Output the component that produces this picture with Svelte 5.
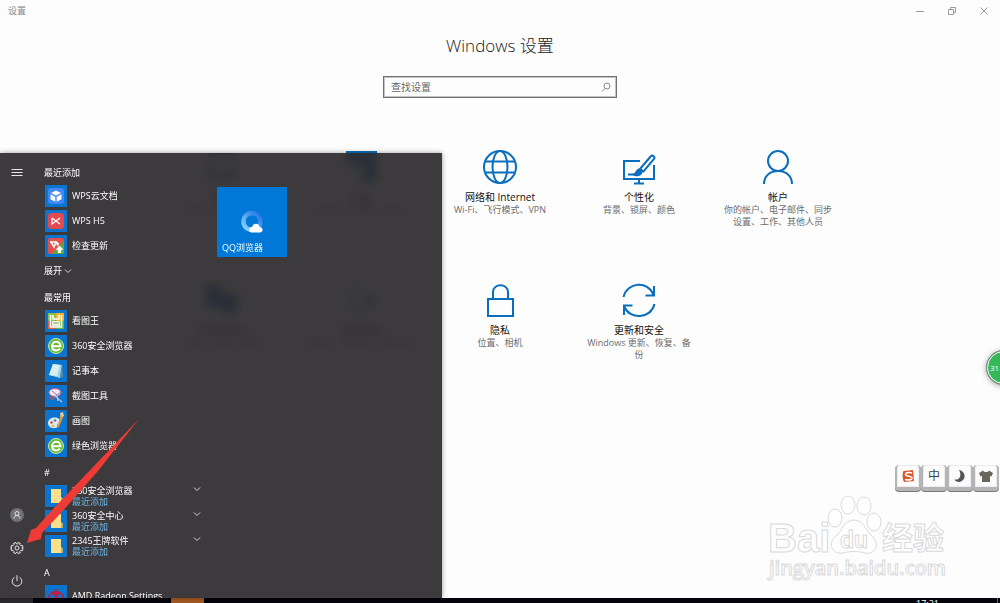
<script lang="ts">
	// Types/constants
	type App = {
		name: string
		icon: string
		note?: string
	}

	type AppGroup = {
		title: string
		apps: App[]
		expandable?: boolean
	}

	const categories = [
		{ icon: 'system', name: '系统', description: '显示、通知、电源' },
		{ icon: 'devices', name: '设备', description: '蓝牙、打印机、鼠标' },
		{ icon: 'network', name: '网络和 Internet', description: 'Wi-Fi、飞行模式、VPN' },
		{ icon: 'personalize', name: '个性化', description: '背景、锁屏、颜色' },
		{ icon: 'account', name: '帐户', description: '你的帐户、电子邮件、同步设置、工作、其他人员' },
		{ icon: 'time', name: '时间和语言', description: '语音、区域、日期' },
		{ icon: 'ease', name: '轻松使用', description: '讲述人、放大镜、高对比度' },
		{ icon: 'privacy', name: '隐私', description: '位置、相机' },
		{ icon: 'update', name: '更新和安全', description: 'Windows 更新、恢复、备份' },
	]

	const groups: AppGroup[] = [
		{
			title: '最近添加',
			expandable: true,
			apps: [
				{ name: 'WPS云文档', icon: 'cube' },
				{ name: 'WPS H5', icon: 'h5' },
				{ name: '检查更新', icon: 'wps-update' },
			],
		},
		{
			title: '最常用',
			apps: [
				{ name: '看图王', icon: 'viewer' },
				{ name: '360安全浏览器', icon: 'browser' },
				{ name: '记事本', icon: 'notepad' },
				{ name: '截图工具', icon: 'snip' },
				{ name: '画图', icon: 'paint' },
				{ name: '绿色浏览器', icon: 'browser' },
			],
		},
		{
			title: '#',
			apps: [
				{ name: '360安全浏览器', icon: 'folder', note: '最近添加' },
				{ name: '360安全中心', icon: 'folder', note: '最近添加' },
				{ name: '2345王牌软件', icon: 'folder', note: '最近添加' },
			],
		},
		{
			title: 'A',
			apps: [
				{ name: 'AMD Radeon Settings', icon: 'amd' },
			],
		},
	]


	// State
	let query = $state('')
</script>


{#snippet categoryIcon(icon: string)}
	<svg class="category-icon" viewBox="0 0 36 36" aria-hidden="true">
		{#if icon === 'system'}
			<path d="M6 5h24v18H6zM1 29h34" />
		{:else if icon === 'devices'}
			<path class="solid" d="M4 3h29v12H4zM20 10h13v22H20z" />
		{:else if icon === 'network'}
			<circle cx="18" cy="18" r="16" />
			<ellipse cx="18" cy="18" rx="7.500" ry="16" />
			<path d="M3.500 12.500h29M3.500 23.500h29" />
		{:else if icon === 'personalize'}
			<path d="M19 12H3v18h30V16M18 30v4M13 34.500h10" />
			<path d="M7 25.500h8" />
			<path d="M19 20 30 7c1.500-1.500 4.500 1 3 3L22.500 22.500z" />
			<path class="solid" d="M13 25.500c2.500-.5 2-4.500 5-5 2.500 0 3.500 2 2 4s-4.500 2-7 1z" />
		{:else if icon === 'account'}
			<circle cx="18" cy="12" r="10" />
			<path d="M4 35c0-8 6-13 14-13s14 5 14 13" />
		{:else if icon === 'time'}
			<path class="solid" d="M3 3h14v22H3zM18 12h15v18H18z" />
		{:else if icon === 'ease'}
			<path d="M30 18a12 12 0 1 1-12-12M14 18h18M24 10l8 8" />
		{:else if icon === 'privacy'}
			<path d="M6 17h25v17H6z" />
			<path d="M11 17v-7c0-9 15-9 15 0v7" />
		{:else}
			<path d="M2.500 15C6 0 27-2 32.500 13M33 4v9.500h-8.500" />
			<path d="M33.500 22C30 37 9 38 3.500 25M3 33v-9.500h8.500" />
		{/if}
	</svg>
{/snippet}


{#snippet appIcon(icon: string)}
	<svg class="app-icon" viewBox="0 0 22 22" aria-hidden="true">
		{#if icon === 'cube'}
			<rect x="3" y="3" width="16" height="16" rx="3" fill="#3f87f5" />
			<path d="M11 5.500 16 8l-5 2.500L6 8z" fill="#fff" />
			<path d="M5.500 9.300 10.300 11.700v5L5.500 14.300zM16.500 9.300 11.700 11.700v5l4.800-2.400z" fill="#fff" />
		{:else if icon === 'h5'}
			<rect x="3" y="3" width="16" height="16" rx="3" fill="#e04a50" />
			<path d="M7 8v6l4-3 4-3M7 8l4 3 4 3" fill="none" stroke="#fff" stroke-width="1.200" />
		{:else if icon === 'wps-update'}
			<rect x="3" y="3" width="16" height="16" rx="2" fill="#e2504a" />
			<path d="M19 6v11a2 2 0 0 1-2 2H7z" fill="#55ab3a" />
			<path d="M5 7h6l3 2M6 7l3 5 2-5 2 4" fill="none" stroke="#fff" stroke-width="1.500" />
			<path d="m14.500 10.500 4 4.200h-2.300V18h-3.400v-3.300h-2.300z" fill="#fff" />
		{:else if icon === 'viewer'}
			<rect x="3" y="3" width="8" height="8" rx="1" fill="#8cc63f" />
			<rect x="11" y="3" width="8" height="8" rx="1" fill="#f7b52c" />
			<rect x="3" y="11" width="8" height="8" rx="1" fill="#ee6333" />
			<rect x="11" y="11" width="8" height="8" rx="1" fill="#62b84a" />
			<path d="M5.500 5v12h11V5M8 5v4h6V5M8 9h6" fill="none" stroke="#fff" stroke-width="1.500" />
			<path d="M7 11h8v5H7z" fill="#e9f1df" />
			<path d="M8.500 13h5" stroke="#8a9474" />
		{:else if icon === 'browser'}
			<circle cx="11" cy="11" r="7.500" fill="#63b92f" stroke="#c8ecac" stroke-width="1" />
			<path d="M6.500 11.200h9c0-6-8.500-5.800-8.500 0 0 4.800 5.500 5.300 8 2.500" fill="none" stroke="#fff" stroke-width="2" />
		{:else if icon === 'notepad'}
			<path d="m8 4 9 1-2 13-11-3z" fill="#a3d4de" />
			<path d="m8 4 7 1-3 11-8-1z" fill="#d7eff3" />
			<path d="m17 5-2 13 3-1z" fill="#5c8e9c" />
		{:else if icon === 'snip'}
			<ellipse cx="10" cy="7.500" rx="6" ry="4" fill="#f2e5ee" stroke="#c65a86" />
			<path d="m7 6 5 4M8 13l8-6" stroke="#7e8aa2" />
			<path d="m10 11 7 6M12 10l1 6" stroke="#b9c1cf" stroke-width="1.300" />
			<ellipse cx="7" cy="13" rx="2" ry="1.500" fill="none" stroke="#d14f55" />
		{:else if icon === 'paint'}
			<path d="M3 13c0-5 7-7 11-4 3 3 1 5-1 5-2 1 1 4-3 4-4 1-7-2-7-5z" fill="#dce8ef" />
			<circle cx="6.500" cy="12.500" r="1.300" fill="#d8433c" />
			<circle cx="10" cy="10.500" r="1.300" fill="#3b86cf" />
			<circle cx="8" cy="16" r="1.300" fill="#e9ad28" />
			<path d="m16 3 3 2-5 12-2 1 1-4z" fill="#d5964c" />
			<path d="m15 3 3-1 1 4-3 1z" fill="#e6c995" />
		{:else if icon === 'folder'}
			<path d="M6 4h10v8l1.500 1.500V18H6z" fill="#fbe08b" />
			<path d="M16 12v6h1.500v-4.500z" fill="#e0ae43" />
		{:else}
			<path d="M4 13c0-8 14-8 14 0M7 7l8 8M15 7l-8 8M11 4v10" fill="none" stroke="#b51f43" stroke-width="2" />
		{/if}
	</svg>
{/snippet}


{#snippet chevron()}
	<svg class="chevron" viewBox="0 0 8 8" aria-hidden="true">
		<path d="m1 2.500 3 3 3-3" />
	</svg>
{/snippet}


<div class="desktop">
	<main class="settings">
		<header class="titlebar">
			<span class="app-title">设置</span>
			<button type="button" aria-label="最小化">
				<svg viewBox="0 0 10 10"><path d="M1 5.500h8" /></svg>
			</button>
			<button type="button" aria-label="还原">
				<svg viewBox="0 0 10 10"><path d="M1.500 3.500h5v5h-5zM3.500 3.500v-2h5v5h-2" /></svg>
			</button>
			<button type="button" aria-label="关闭">
				<svg viewBox="0 0 10 10"><path d="m1.500 1.500 7 7M8.500 1.500l-7 7" /></svg>
			</button>
		</header>

		<h1>Windows 设置</h1>

		<form class="search" role="search">
			<input type="text" placeholder="查找设置" aria-label="查找设置" bind:value={query} />
			<button type="button" aria-label="搜索">
				<svg viewBox="0 0 10 10"><circle cx="6" cy="4" r="3" /><path d="M4 6.500 1 9.500" /></svg>
			</button>
		</form>

		<nav class="categories">
			{#each categories as category}
				<a href="#{category.icon}">
					{@render categoryIcon(category.icon)}
					<span class="name">{category.name}</span>
					<span class="description">{category.description}</span>
				</a>
			{/each}
		</nav>
	</main>

	<footer class="taskbar">
		<button type="button" class="start" aria-label="开始"></button>
		<button type="button" class="running" aria-label="设置"></button>
		<time>17:21</time>
		<button type="button" class="show-desktop" aria-label="显示桌面"></button>
	</footer>

	<section class="start-menu" aria-label="开始菜单">
		<div class="rail">
			<button type="button" aria-label="展开">
				<svg viewBox="0 0 14 14"><path d="M1.500 3.500h11M1.500 6.500h11M1.500 9.500h11" /></svg>
			</button>
			<button type="button" class="user" aria-label="帐户">
				<svg viewBox="0 0 14 14">
					<circle class="disc" cx="7" cy="7" r="7" />
					<circle cx="7" cy="5.500" r="2" />
					<path d="M4 10.500c0-4 6-4 6 0" />
				</svg>
			</button>
			<button type="button" aria-label="设置">
				<svg viewBox="0 0 14 14">
					<path d="m5.800 1.500.4 1.300h1.600l.4-1.300 2.200.9-.6 1.300 1.100 1.100 1.300-.6.9 2.200-1.300.6 1.300.6-.9 2.200-1.300-.5-1.100 1.100.6 1.300-2.200.9-.5-1.300H6.200l-.5 1.300-2.200-.9.600-1.300L3 9.300l-1.300.5-.9-2.200L2.100 7 .8 6.400l.9-2.200 1.300.6 1.100-1.100-.6-1.300z" />
					<circle cx="7" cy="7" r="2" />
				</svg>
			</button>
			<button type="button" aria-label="电源">
				<svg viewBox="0 0 14 14"><path d="M4.500 3.200a4.800 4.800 0 1 0 5 0M7 1.200V7" /></svg>
			</button>
		</div>

		<div class="apps">
			{#each groups as group}
				<h2>{group.title}</h2>
				{#each group.apps as app}
					<button type="button" class="app">
						{@render appIcon(app.icon)}
						<span class="label">
							{app.name}
							{#if app.note}
								<small>{app.note}</small>
							{/if}
						</span>
						{#if app.note}
							{@render chevron()}
						{/if}
					</button>
				{/each}
				{#if group.expandable}
					<button type="button" class="expand">展开 {@render chevron()}</button>
				{/if}
			{/each}
		</div>

		<div class="tiles">
			<button type="button" class="tile">
				<svg viewBox="0 0 24 24" aria-hidden="true">
					<defs>
						<linearGradient id="ring" x1="0" y1="1" x2="1" y2="0">
							<stop offset="0" stop-color="#8fd6ff" />
							<stop offset="1" stop-color="#1b72e0" />
						</linearGradient>
					</defs>
					<circle cx="12" cy="11.500" r="8.500" fill="none" stroke="url(#ring)" stroke-width="4.500" />
					<path d="M12 22.500c-4 0-4-5.500 0-5.500 1-4.500 7-4.500 7.800 0 4 .5 3.500 5.500 0 5.500z" fill="#fff" />
				</svg>
				<span>QQ浏览器</span>
			</button>
		</div>
	</section>

	<svg class="arrow" viewBox="0 0 114 126" aria-hidden="true">
		<path d="M113 1 72 53 34 96 16 115 15 121 1 125 5 112 10 110 27 91 68 48z" />
	</svg>

	<div class="ime" role="toolbar" aria-label="输入法">
		<button type="button" aria-label="搜狗输入法">
			<svg viewBox="0 0 14 14">
				<path d="M2.500 2 12 1l1 11-9.500 1C1.500 13 1 4 2.500 2z" fill="#dc5427" />
				<path d="M11 4C8 3 4.500 3.500 4.500 5.500S11 7 11 9s-3.500 2.500-7 1.500" fill="none" stroke="#fff" stroke-width="1.700" />
			</svg>
		</button>
		<button type="button">中</button>
		<button type="button" aria-label="半角">
			<svg viewBox="0 0 14 14"><path d="M6 1c7 1 8 11 0 12-2 0-4-1-4.500-2.500C7 11.500 9 6 6 1z" fill="#55565a" /></svg>
		</button>
		<button type="button" aria-label="皮肤">
			<svg viewBox="0 0 14 14"><path d="M4 1.500c1 2 5 2 6 0L14 4l-1.500 3.500-1.500-.5v6H3V7l-1.500.5L0 4z" fill="#68655c" /></svg>
		</button>
	</div>

	<button type="button" class="ball">31</button>

	<svg class="watermark" viewBox="0 0 184 92" aria-hidden="true">
		<text class="latin" x="2" y="57" font-size="40">Bai</text>
		<ellipse cx="69" cy="23" rx="7" ry="9" />
		<ellipse cx="82" cy="10" rx="7" ry="9" />
		<ellipse cx="98" cy="11" rx="7" ry="9" />
		<ellipse cx="108" cy="27" rx="7" ry="9" />
		<path d="M88 25c10 0 12 12 18 16 9 8 3 19-7 17-7-2-15-2-22 0-11 2-16-10-7-17 6-5 8-16 18-16z" />
		<text class="latin" x="74" y="53" font-size="23">du</text>
		<text class="cjk" x="116" y="54" font-size="31">经验</text>
		<text class="url" x="3" y="80" font-size="20">jingyan.baidu.com</text>
	</svg>
</div>


<style>
	:global(body) {
		margin: 0;
	}

	.desktop {
		--accent: #0a6ebd;
		--tile: #0078d7;
		--taskbar-height: 5px;

		position: relative;
		display: flex;
		flex-direction: column;
		min-height: 100vh;
		overflow: hidden;
		background: #fdfdfd;
		color: #222;
		font-family: 'Open Sans', 'Noto Sans CJK SC', sans-serif;
		font-size: 9px;
		line-height: 12px;
	}

	button {
		display: flex;
		align-items: center;
		justify-content: center;
		padding: 0;
		background: transparent;
		border: none;
		color: inherit;
		font: inherit;
	}

	svg {
		flex: none;
	}

	/* Settings window */
	.settings {
		flex: 1;
		display: flex;
		flex-direction: column;
		align-items: center;
	}

	.titlebar {
		align-self: stretch;
		display: flex;
		align-items: center;
		height: 22px;
		color: #888;

		& .app-title {
			margin-right: auto;
			padding-left: 8px;
		}

		& button {
			width: 32px;
			height: 22px;
		}

		& svg {
			width: 10px;
			height: 10px;
			fill: none;
			stroke: #999;
		}
	}

	h1 {
		margin: 12px 0 19px;
		font-size: 17px;
		font-weight: 300;
		line-height: 23px;
	}

	.search {
		display: flex;
		box-sizing: border-box;
		width: 234px;
		height: 22px;
		border: 1px solid #707070;
		outline: 1px solid #c4c4c4;
		outline-offset: -2px;

		& input {
			flex: 1;
			min-width: 0;
			padding: 0 7px;
			background: transparent;
			border: none;
			outline: none;
			font: inherit;
			font-size: 10px;

			&::placeholder {
				color: #666;
			}
		}

		& button {
			width: 20px;
		}

		& svg {
			width: 10px;
			height: 10px;
			fill: none;
			stroke: #888;
		}
	}

	.categories {
		display: grid;
		grid-template-columns: repeat(5, 1fr);
		grid-auto-rows: minmax(133px, auto);
		width: 100%;
		max-width: 695px;
		margin-top: 51px;

		& a {
			display: flex;
			flex-direction: column;
			align-items: center;
			padding: 0 15px;
			color: inherit;
			text-align: center;
			text-decoration: none;
		}
	}

	.category-icon {
		width: 36px;
		height: 36px;
		margin-bottom: 5px;
		fill: none;
		stroke: var(--accent);
		stroke-width: 2;

		& .solid {
			fill: var(--accent);
		}
	}

	.name {
		color: #111;
		font-size: 10px;
		line-height: 14px;
	}

	.description {
		color: #6c6c6c;
	}

	/* Start menu */
	.start-menu {
		position: absolute;
		top: 153px;
		bottom: var(--taskbar-height);
		left: 0;
		display: flex;
		box-sizing: border-box;
		width: 442px;
		overflow: hidden;
		background: rgb(45 43 45 / 93%);
		box-shadow: 0 0 5px rgb(0 0 0 / 40%);
		color: #fff;
		backdrop-filter: blur(4px);
	}

	.rail {
		display: flex;
		flex-direction: column;
		flex: none;
		width: 33px;
		padding: 3px 0 1px;

		& button {
			height: 33px;
		}

		& .user {
			margin-top: auto;
		}

		& svg {
			width: 14px;
			height: 14px;
			fill: none;
			stroke: #e6e6e6;
		}

		& .disc {
			fill: #717073;
			stroke: none;
		}
	}

	.apps {
		flex: none;
		width: 157px;
		padding: 5px 0 0 11px;

		& h2 {
			margin: 0;
			padding-top: 5px;
			font-size: 9px;
			font-weight: 400;
			line-height: 20px;
		}
	}

	.app {
		gap: 5px;
		width: 100%;
		height: 25px;
		text-align: left;

		& .label {
			flex: 1;
			line-height: 11px;
			white-space: nowrap;
		}

		& small {
			display: block;
			color: #6fb4e6;
			font-size: inherit;
		}

		& .chevron {
			align-self: flex-start;
			margin-top: 2px;
		}
	}

	.app-icon {
		width: 22px;
		height: 22px;
		margin-left: 1px;
		background: #0b74cf;
	}

	.expand {
		gap: 2px;
		height: 25px;
	}

	.chevron {
		width: 8px;
		height: 8px;
		fill: none;
		stroke: #d8d8d8;
	}

	.tiles {
		padding: 34px 0 0 16px;
	}

	.tile {
		flex-direction: column;
		justify-content: flex-end;
		gap: 8px;
		width: 70px;
		height: 70px;
		background: var(--tile);

		& svg {
			width: 24px;
			height: 24px;
		}

		& span {
			align-self: stretch;
			padding: 0 0 3px 5px;
			text-align: left;
		}
	}

	/* Taskbar */
	.taskbar {
		display: flex;
		height: var(--taskbar-height);
		overflow: hidden;
		background: #05030b;
		color: #fff;

		& .start {
			width: 33px;
			background: #2b2a2e;
		}

		& .running {
			width: 33px;
			margin-left: 138px;
			background: #a65a22;
		}

		& time {
			margin-left: auto;
			padding-right: 58px;
		}

		& .show-desktop {
			width: 3px;
			border-left: 1px solid #666;
		}
	}

	/* Overlays */
	.arrow {
		position: absolute;
		top: 418px;
		left: 26px;
		width: 114px;
		height: 126px;
		fill: #ef3b36;
		pointer-events: none;
	}

	.ime {
		position: absolute;
		top: 465px;
		right: 1px;
		display: flex;

		& button {
			box-sizing: border-box;
			width: 26px;
			height: 26px;
			background: #fcfcfc;
			border: solid #b5b5b8;
			border-width: 0 2px 4px;
			border-radius: 4px;
			box-shadow: inset 0 0 0 1px #ececee, 0 1px 0 #77777a;
			color: #444;
			font-size: 12px;
		}

		& svg {
			width: 14px;
			height: 14px;
		}
	}

	.ball {
		position: absolute;
		top: 351px;
		right: -20px;
		box-sizing: border-box;
		justify-content: flex-start;
		width: 33px;
		height: 33px;
		padding-left: 2px;
		background: #35b958;
		border: 1px solid #fff;
		border-radius: 50%;
		box-shadow: 0 0 0 1px #6a8f74, 0 1px 6px rgb(0 0 0 / 50%);
		color: #fff;
		font-size: 8px;
	}

	.watermark {
		position: absolute;
		right: 50px;
		bottom: 16px;
		width: 184px;
		height: 92px;
		fill: #fff;
		stroke: #d9d9d9;
		stroke-width: 1;
		pointer-events: none;

		& .latin {
			font-family: 'Liberation Sans', sans-serif;
			font-weight: 700;
		}

		& .url {
			font-family: 'Open Sans', sans-serif;
			font-weight: 600;
		}

		& .cjk {
			font-family: 'Noto Sans CJK SC', sans-serif;
			font-weight: 700;
		}
	}
</style>
